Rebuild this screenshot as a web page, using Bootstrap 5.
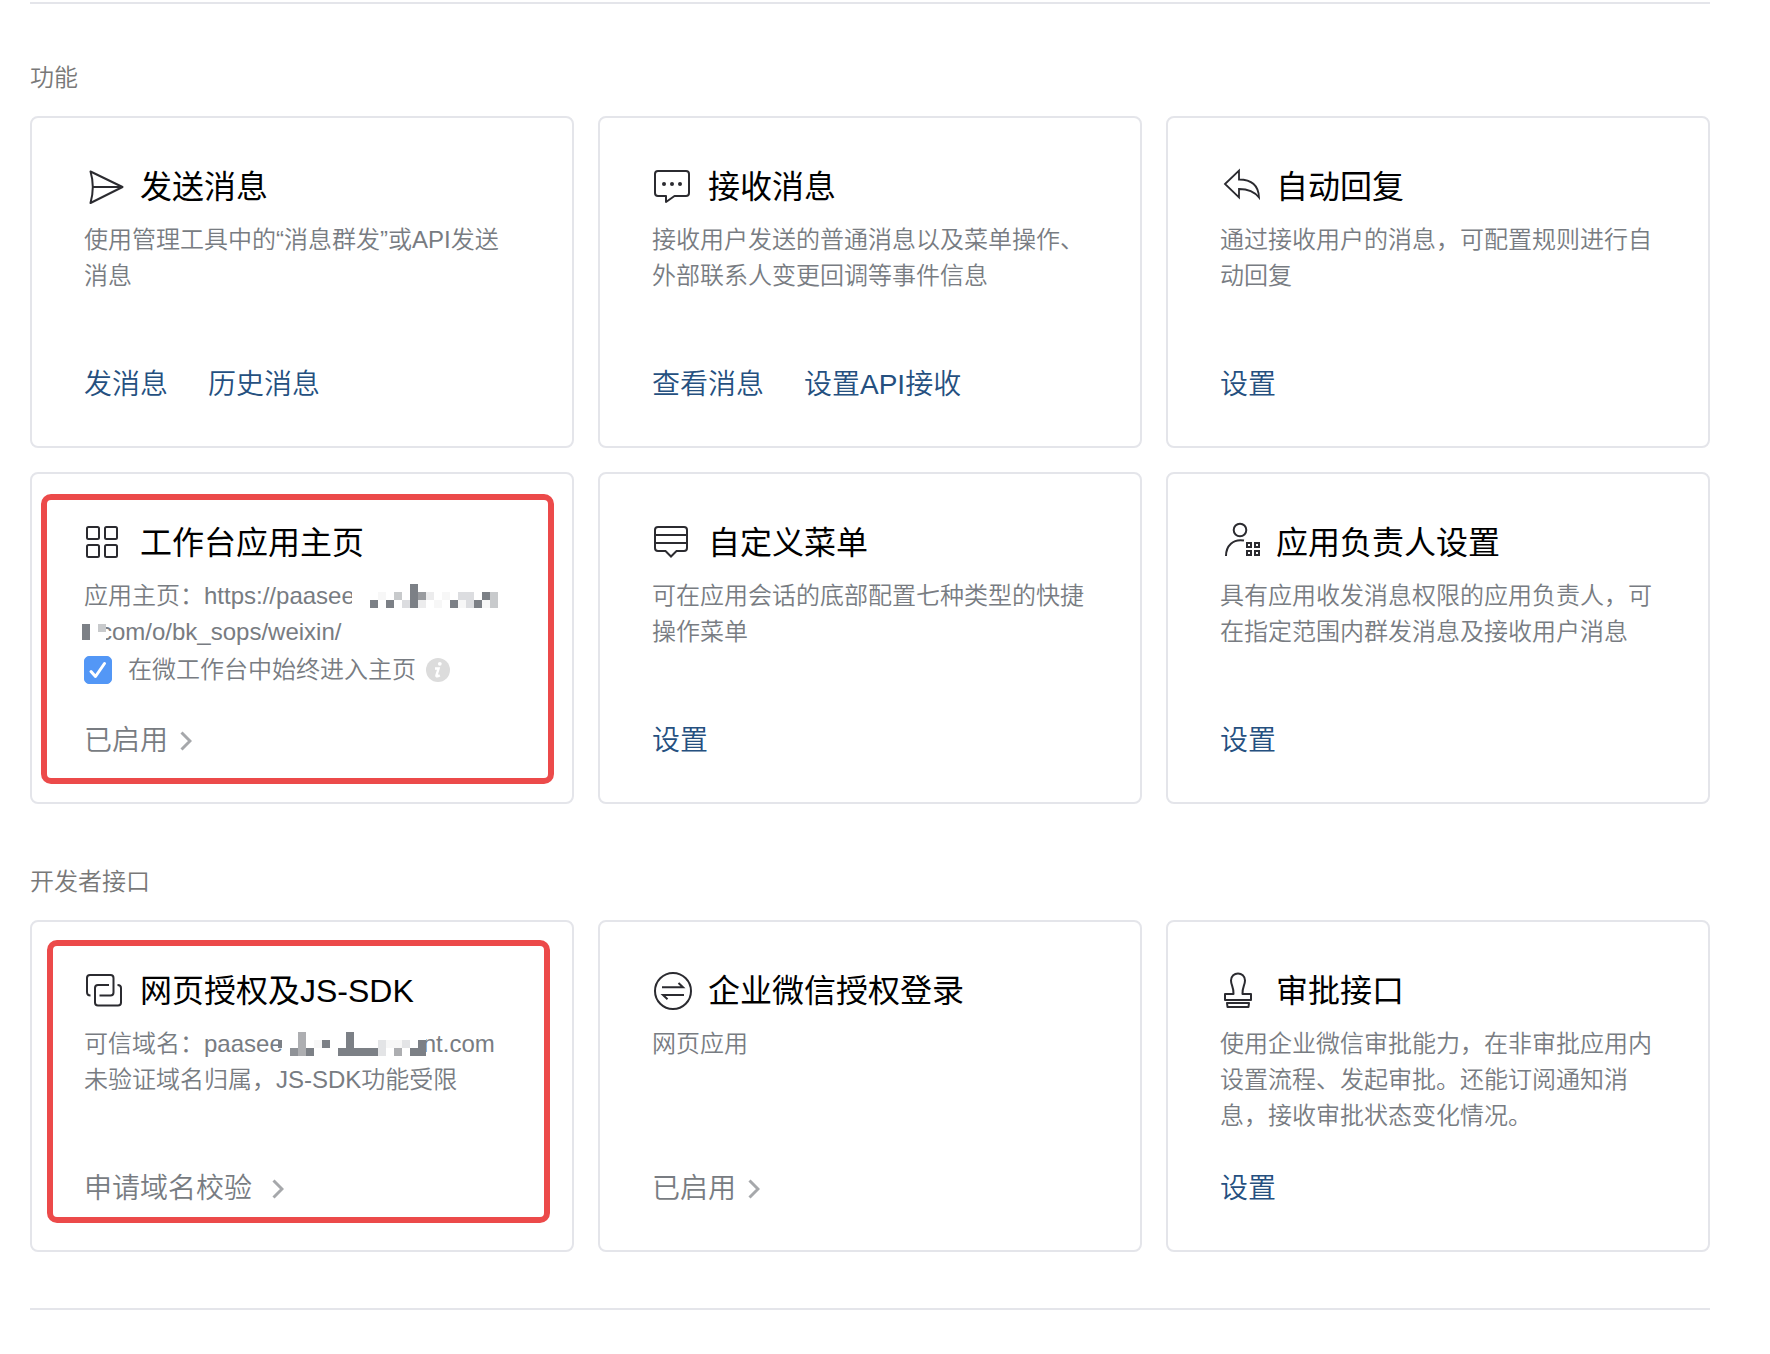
<!DOCTYPE html>
<html lang="zh-CN">
<head>
<meta charset="utf-8">
<meta name="viewport" content="width=device-width, initial-scale=1">
<title>应用管理</title>
<link href="https://cdn.jsdelivr.net/npm/bootstrap@5.3.0/dist/css/bootstrap.min.css" rel="stylesheet">
<style>
  body { font-family: "Liberation Sans", "Noto Sans CJK SC", sans-serif; font-weight: 350; background: #fff; color: #787c82; }
  .page { padding: 2px 60px 40px 30px; }
  .divider { border-top: 2px solid #e4e5ea; opacity: 1; margin: 0; }
  .group-block { padding-top: 56px; }
  .group-block + .group-block { padding-top: 60px; }
  .group-block + .divider { margin-top: 56px; }
  .group-title { font-size: 24px; line-height: 36px; margin-bottom: 20px; font-weight: 350; color: #787878; }
  .feature { border: 2px solid #e4e5ea; border-radius: 8px; min-height: 332px; padding: 45px 52px 41px; background: #fff; }
  .feature-title { font-size: 32px; line-height: 48px; font-weight: 400; color: #000; margin-bottom: 11px; gap: 12px; }
  .feature-icon { width: 44px; height: 48px; margin-top: -1px; flex: none; fill: none; stroke: #2b2b30; stroke-width: 2; }
  .feature-text { font-size: 24px; line-height: 36px; margin: 0; }
  .feature-links { font-size: 28px; line-height: 40px; gap: 40px; }
  .feature-links a { color: #25507f; text-decoration: none; }
  .feature-links a.state-link { color: #787c82; gap: 12px; }
  .chevron { width: 12px; height: 20px; fill: none; stroke: #a6a8ab; stroke-width: 3; }
  .always-open { height: 40px; font-size: 24px; line-height: 36px; }
  .always-open .form-check-input { width: 28px; height: 28px; margin: 0 16px 0 0; border-radius: 5px; }
  .always-open .form-check-input:checked { background-color: #5397f6; border-color: #5397f6; background-size: 28px 28px;
    background-image: url("data:image/svg+xml,%3csvg xmlns='http://www.w3.org/2000/svg' viewBox='0 0 28 28'%3e%3cpath fill='none' stroke='%23fff' stroke-width='3' stroke-linecap='round' stroke-linejoin='round' d='M7 15.5l4.500 5L20.500 7.500'/%3e%3c/svg%3e"); }
  .hint { width: 24px; height: 24px; margin-left: 10px; }
  .mosaic { position: relative; height: 24px; vertical-align: -4px; }
  .mosaic-url { width: 146px; margin-left: -3px; }
  .mosaic-wrap { width: 24px; margin: 0 -6px 0 -2px; }
  .mosaic-domain { width: 152px; margin: 0 -3px 0 -9px; }
  .callout-frame { position: absolute; border: 6px solid #ec4a4a; border-radius: 10px; pointer-events: none; }
  .frame-home { inset: 20px 18px 18px 9px; }
  .frame-auth { inset: 18px 22px 27px 15px; }
</style>
</head>
<body>
<main class="page container-fluid">
  <hr class="divider">

  <section class="group-block">
    <h2 class="group-title">功能</h2>
    <div class="row row-cols-1 row-cols-md-2 row-cols-xl-3 g-4">
      <div class="col">
        <article class="feature h-100 d-flex flex-column">
          <h3 class="feature-title d-flex align-items-start">
            <svg class="feature-icon" viewBox="0 0 44 48" aria-hidden="true"><path stroke-linejoin="round" d="M6.500 9.500L38.500 25 6.500 41Q8.800 33 8.800 25T6.500 9.500zM8.800 25H38"/></svg>
            发送消息</h3>
          <p class="feature-text">使用管理工具中的“消息群发”或API发送消息</p>
          <div class="feature-links d-flex mt-auto"><a href="#">发消息</a><a href="#">历史消息</a></div>
        </article>
      </div>
      <div class="col">
        <article class="feature h-100 d-flex flex-column">
          <h3 class="feature-title d-flex align-items-start">
            <svg class="feature-icon" viewBox="0 0 44 48" aria-hidden="true"><path stroke-linejoin="round" d="M6 9H34Q37 9 37 12V31Q37 34 34 34H22.500L14 40V34H6Q3 34 3 31V12Q3 9 6 9z"/><g fill="#2b2b30" stroke="none"><circle cx="12" cy="22" r="2"/><circle cx="20" cy="22" r="2"/><circle cx="28" cy="22" r="2"/></g></svg>
            接收消息</h3>
          <p class="feature-text">接收用户发送的普通消息以及菜单操作、外部联系人变更回调等事件信息</p>
          <div class="feature-links d-flex mt-auto"><a href="#">查看消息</a><a href="#">设置API接收</a></div>
        </article>
      </div>
      <div class="col">
        <article class="feature h-100 d-flex flex-column">
          <h3 class="feature-title d-flex align-items-start">
            <svg class="feature-icon" viewBox="0 0 44 48" aria-hidden="true"><path stroke-width="1.800" d="M5 22L19 8.500V17.500C31 17.500 38.500 23 39 35.500C34 29 28 27 19 27V35.500z"/></svg>
            自动回复</h3>
          <p class="feature-text">通过接收用户的消息，可配置规则进行自动回复</p>
          <div class="feature-links d-flex mt-auto"><a href="#">设置</a></div>
        </article>
      </div>
      <div class="col">
        <article class="feature h-100 d-flex flex-column position-relative">
          <h3 class="feature-title d-flex align-items-start">
            <svg class="feature-icon" viewBox="0 0 44 48" aria-hidden="true"><rect x="3" y="9" width="12" height="12" rx="1.500"/><rect x="21" y="9" width="12" height="12" rx="1.500"/><rect x="3" y="27" width="12" height="12" rx="1.500"/><rect x="21" y="27" width="12" height="12" rx="1.500"/></svg>
            工作台应用主页</h3>
          <p class="feature-text">应用主页：https://paasee<svg class="mosaic mosaic-url" viewBox="0 0 146 24" shape-rendering="crispEdges" aria-hidden="true"><path fill="#fff" d="M0 0h146v24H0z"/><g transform="translate(18)"><path fill="#7c8086" d="M40 0h8v24h-8zM0 16h8v8H0zM16 16h8v8h-8zM80 16h8v8h-8zM104 16h8v8h-8zM112 8h8v8h-8z"/><path fill="#c8cacc" d="M24 8h8v8h-8zM120 8h8v8h-8zM120 16h8v8h-8z"/><path fill="#999b9f" d="M48 8h8v8h-8z"/><path fill="#dcdde0" d="M32 16h8v8h-8zM88 8h16v8H88zM96 16h8v8h-8z"/><path fill="#ececed" d="M56 8h8v8h-8zM48 16h8v8h-8z"/><path fill="#f7f7f7" d="M8 8h8v8H8zM64 16h8v8h-8zM72 8h8v8h-8zM88 16h8v8h-8zM112 16h8v8h-8z"/></g></svg><br><svg class="mosaic mosaic-wrap" viewBox="0 0 24 24" shape-rendering="crispEdges" aria-hidden="true"><path fill="#fff" d="M0 0h24v24H0z"/><path fill="#7c8086" d="M0 4h8v16H0z"/><path fill="#c8cacc" d="M16 4h8v8h-8z"/></svg>com/o/bk_sops/weixin/</p>
          <div class="always-open d-flex align-items-center">
            <input class="form-check-input" type="checkbox" id="alwaysHome" checked>
            <label for="alwaysHome">在微工作台中始终进入主页</label>
            <svg class="hint" viewBox="0 0 24 24" role="img" aria-label="说明"><circle cx="12" cy="12" r="12" fill="#dcdcdc"/><circle cx="13.800" cy="5.800" r="1.900" fill="#fff"/><path fill="none" stroke="#fff" stroke-width="2.400" d="M9 10.500H12.600L10.400 17.500Q10.200 19.200 13.800 17.400"/></svg>
          </div>
          <div class="feature-links d-flex mt-auto"><a href="#" class="state-link d-flex align-items-center">已启用<svg class="chevron" viewBox="0 0 12 20" aria-hidden="true"><path d="M1.500 1.500L10 10 1.500 18.500"/></svg></a></div>
          <div class="callout-frame frame-home"></div>
        </article>
      </div>
      <div class="col">
        <article class="feature h-100 d-flex flex-column">
          <h3 class="feature-title d-flex align-items-start">
            <svg class="feature-icon" viewBox="0 0 44 48" aria-hidden="true"><path d="M6 9H32Q35 9 35 12V30Q35 33 32 33H24.500L19 38.500 13.500 33H6Q3 33 3 30V12Q3 9 6 9zM3 17H35M3 25H35"/></svg>
            自定义菜单</h3>
          <p class="feature-text">可在应用会话的底部配置七种类型的快捷操作菜单</p>
          <div class="feature-links d-flex mt-auto"><a href="#">设置</a></div>
        </article>
      </div>
      <div class="col">
        <article class="feature h-100 d-flex flex-column">
          <h3 class="feature-title d-flex align-items-start">
            <svg class="feature-icon" viewBox="0 0 44 48" aria-hidden="true"><circle cx="20" cy="12" r="6.300"/><path d="M6 38C6 28 13 20.500 24 22.500M27 25h4v4h-4zM35 25h4v4h-4zM27 33h4v4h-4zM35 33h4v4h-4z"/></svg>
            应用负责人设置</h3>
          <p class="feature-text">具有应用收发消息权限的应用负责人，可在指定范围内群发消息及接收用户消息</p>
          <div class="feature-links d-flex mt-auto"><a href="#">设置</a></div>
        </article>
      </div>
    </div>
  </section>

  <section class="group-block">
    <h2 class="group-title">开发者接口</h2>
    <div class="row row-cols-1 row-cols-md-2 row-cols-xl-3 g-4">
      <div class="col">
        <article class="feature h-100 d-flex flex-column position-relative">
          <h3 class="feature-title d-flex align-items-start">
            <svg class="feature-icon" viewBox="0 0 44 48" aria-hidden="true"><path d="M6.500 29.500Q3 29.500 3 26V12Q3 9 6 9H26.500Q29.500 9 29.500 12V26.500Q29.500 29.500 26.500 29.500H15.500M25 19H14Q11 19 11 22V36.500Q11 39.500 14 39.500H34Q37 39.500 37 36.500V22Q37 19 33.500 19"/></svg>
            网页授权及JS-SDK</h3>
          <p class="feature-text">可信域名：paasee<svg class="mosaic mosaic-domain" viewBox="0 0 152 24" shape-rendering="crispEdges" aria-hidden="true"><path fill="#fff" d="M8 0h144v24H8z"/><g transform="translate(16)"><path fill="#7c8086" d="M-12 8h4v8h-4zM16 16h8v8h-8zM32 8h8v8h-8zM56 0h8v16h24v8H48v-8h8zM128 8h8v16h-16v-8h8z"/><path fill="#adaeb1" d="M8 0h8v24H8zM104 16h8v8h-8z"/><path fill="#8f9297" d="M0 16h8v8H0z"/><path fill="#e3e4e6" d="M88 8h8v16h-8zM112 8h8v8h-8z"/><path fill="#f7f7f7" d="M24 8h8v8h-8zM96 8h16v8H96z"/></g></svg>nt.com<br>未验证域名归属，JS-SDK功能受限</p>
          <div class="feature-links d-flex mt-auto"><a href="#" class="state-link d-flex align-items-center">申请域名校验&nbsp;<svg class="chevron" viewBox="0 0 12 20" aria-hidden="true"><path d="M1.500 1.500L10 10 1.500 18.500"/></svg></a></div>
          <div class="callout-frame frame-auth"></div>
        </article>
      </div>
      <div class="col">
        <article class="feature h-100 d-flex flex-column">
          <h3 class="feature-title d-flex align-items-start">
            <svg class="feature-icon" viewBox="0 0 44 48" aria-hidden="true"><circle cx="21" cy="25" r="18"/><path d="M10 21.300H31L26.500 17M32 29H11L15.500 33.300"/></svg>
            企业微信授权登录</h3>
          <p class="feature-text">网页应用</p>
          <div class="feature-links d-flex mt-auto"><a href="#" class="state-link d-flex align-items-center">已启用<svg class="chevron" viewBox="0 0 12 20" aria-hidden="true"><path d="M1.500 1.500L10 10 1.500 18.500"/></svg></a></div>
        </article>
      </div>
      <div class="col">
        <article class="feature h-100 d-flex flex-column">
          <h3 class="feature-title d-flex align-items-start">
            <svg class="feature-icon" viewBox="0 0 44 48" aria-hidden="true"><path stroke-linejoin="round" d="M5 34V28H13.500C14 22 11 19 11 14.500C11 5 25 5 25 14.500C25 19 22 22 22.500 28H31V34zM7 37H29L28.500 41H7.500z"/></svg>
            审批接口</h3>
          <p class="feature-text">使用企业微信审批能力，在非审批应用内设置流程、发起审批。还能订阅通知消息，接收审批状态变化情况。</p>
          <div class="feature-links d-flex mt-auto"><a href="#">设置</a></div>
        </article>
      </div>
    </div>
  </section>

  <hr class="divider">
</main>
<script src="https://cdn.jsdelivr.net/npm/bootstrap@5.3.0/dist/js/bootstrap.bundle.min.js"></script>
</body>
</html>
